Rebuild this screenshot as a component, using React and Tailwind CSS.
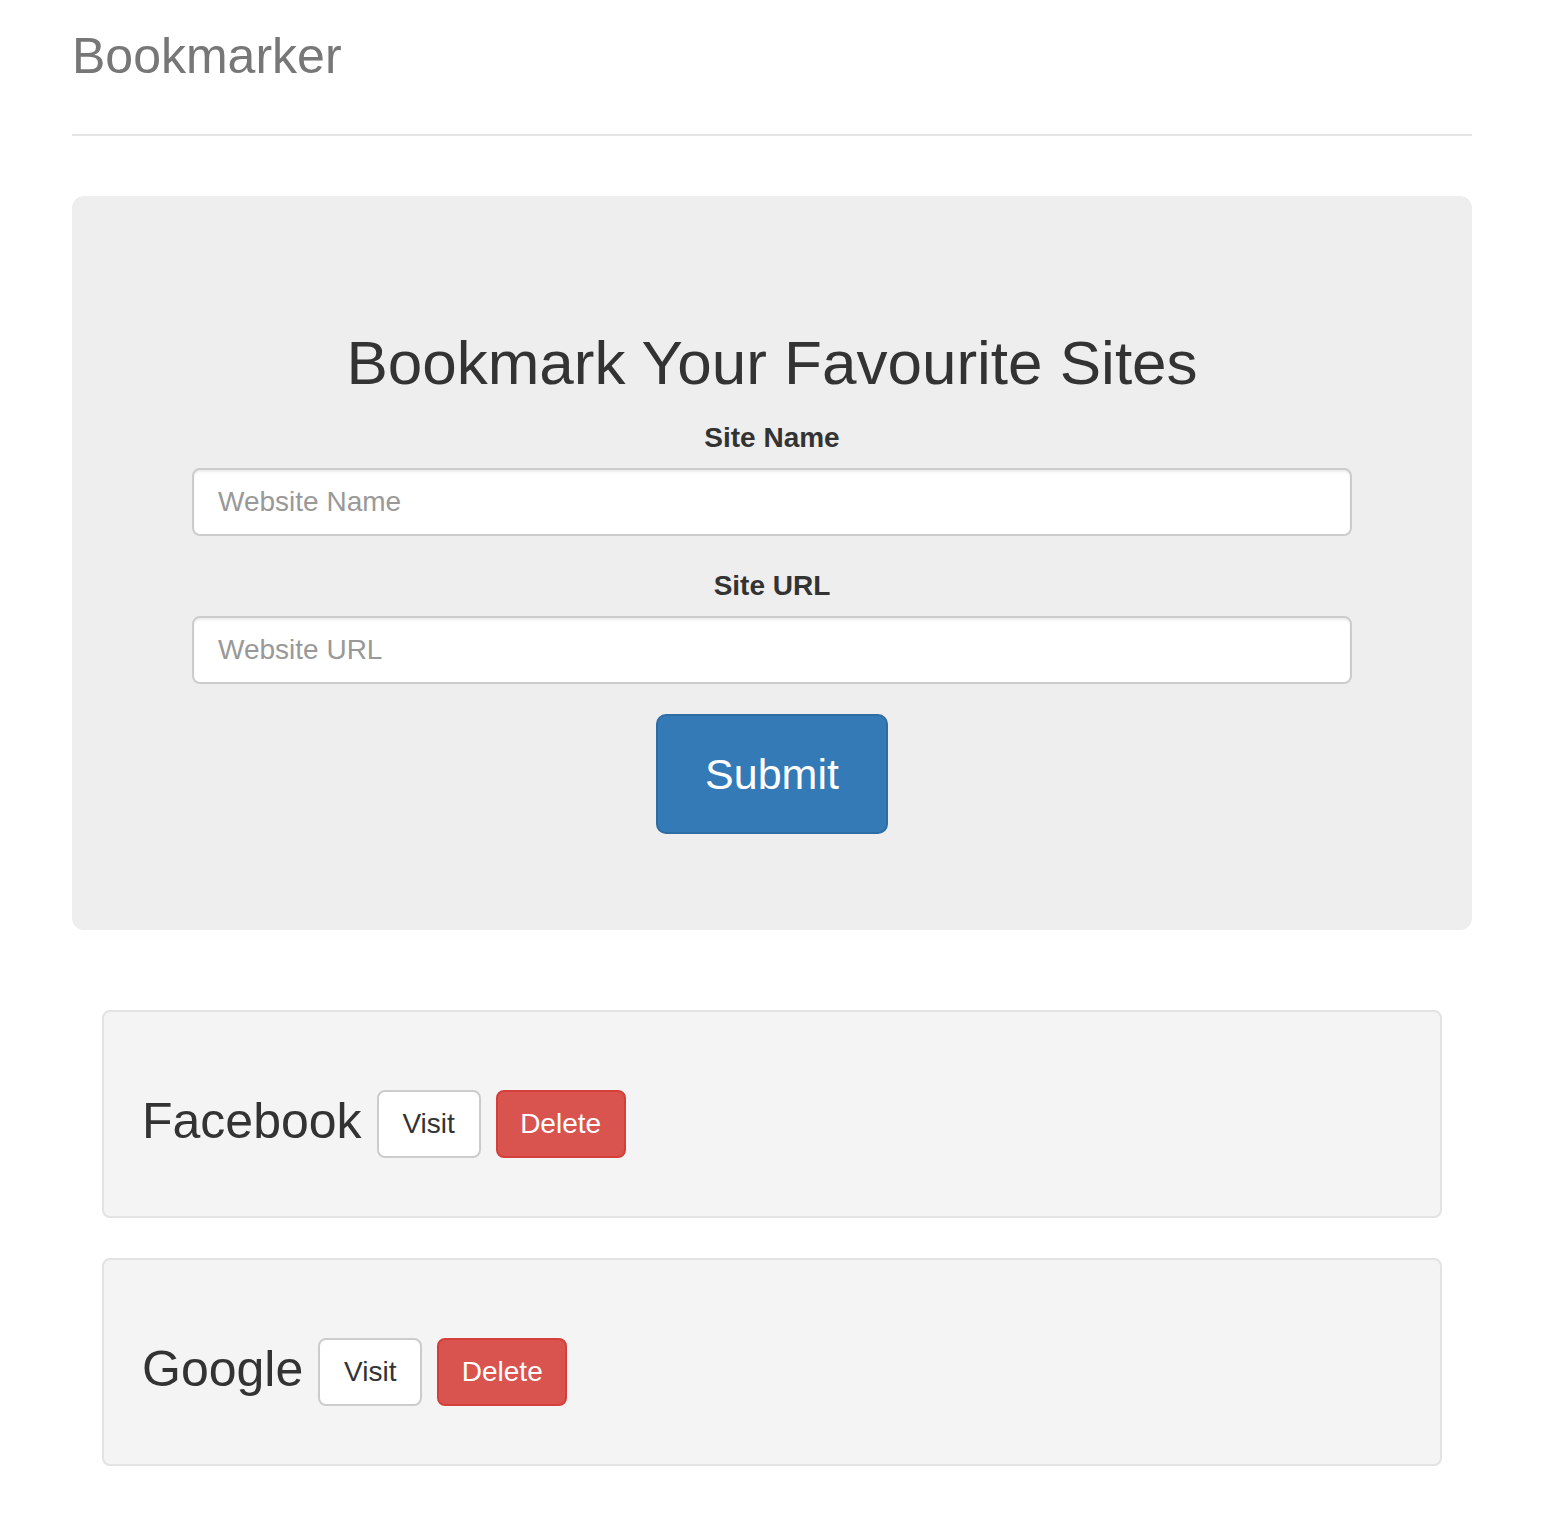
const bookmarks = [
  { name: 'Facebook', url: 'http://facebook.com' },
  { name: 'Google', url: 'http://google.com' },
];

export default function App() {
  return (
    <div className="min-h-screen bg-white font-['Liberation_Sans',Arial,sans-serif] text-[#333]">
      <div className="ml-[72px] w-[1400px] pb-[48px]">
        {/* Header */}
        <div className="pt-[28px] pb-[50px] border-b-2 border-[#e5e5e5]">
          <h3 className="text-[50px] leading-[56px] text-[#777]">Bookmarker</h3>
        </div>

        {/* Jumbotron form */}
        <div className="mt-[60px] rounded-[12px] bg-[#eee] px-[120px] pt-[96px] pb-[96px] text-center">
          <h2 className="mt-[38px] mb-[22px] text-[62px] leading-[66px] text-[#333]">
            Bookmark Your Favourite Sites
          </h2>
          <form onSubmit={e => e.preventDefault()}>
            <div className="mb-[30px]">
              <label className="block mb-[10px] text-[28px] leading-[40px] font-bold">Site Name</label>
              <input
                type="text"
                placeholder="Website Name"
                className="block w-full h-[68px] px-[24px] bg-white border-2 border-[#ccc] rounded-[8px]
                           text-[28px] text-[#555] placeholder:text-[#999] shadow-[inset_0_2px_2px_rgba(0,0,0,0.075)] outline-none"
              />
            </div>
            <div className="mb-[30px]">
              <label className="block mb-[10px] text-[28px] leading-[40px] font-bold">Site URL</label>
              <input
                type="text"
                placeholder="Website URL"
                className="block w-full h-[68px] px-[24px] bg-white border-2 border-[#ccc] rounded-[8px]
                           text-[28px] text-[#555] placeholder:text-[#999] shadow-[inset_0_2px_2px_rgba(0,0,0,0.075)] outline-none"
              />
            </div>
            <button
              type="submit"
              className="w-[232px] h-[120px] bg-[#337ab7] border-2 border-[#2e6da4] rounded-[10px]
                         text-white text-[43px] leading-none"
            >
              Submit
            </button>
          </form>
        </div>

        {/* Bookmark list */}
        <div className="mt-[80px] ml-[30px] w-[1340px] flex flex-col gap-[40px]">
          {bookmarks.map(b => (
            <div key={b.name} className="bg-[#f4f4f4] border-2 border-[#e3e3e3] rounded-[8px] px-[38px] pt-[78px] pb-[58px]">
              <div className="flex items-center gap-[15px] h-[68px]">
                <h3 className="text-[50px] leading-[53px] text-[#333] pb-[6px]">{b.name}</h3>
                <a
                  href={b.url}
                  className="h-[68px] w-[104px] flex items-center justify-center bg-white border-2 border-[#ccc]
                             rounded-[8px] text-[28px] text-[#333]"
                >
                  Visit
                </a>
                <a
                  href="#"
                  className="h-[68px] w-[130px] flex items-center justify-center bg-[#d9534f] border-2 border-[#d43f3a]
                             rounded-[8px] text-[28px] text-white"
                >
                  Delete
                </a>
              </div>
            </div>
          ))}
        </div>
      </div>
    </div>
  );
}
